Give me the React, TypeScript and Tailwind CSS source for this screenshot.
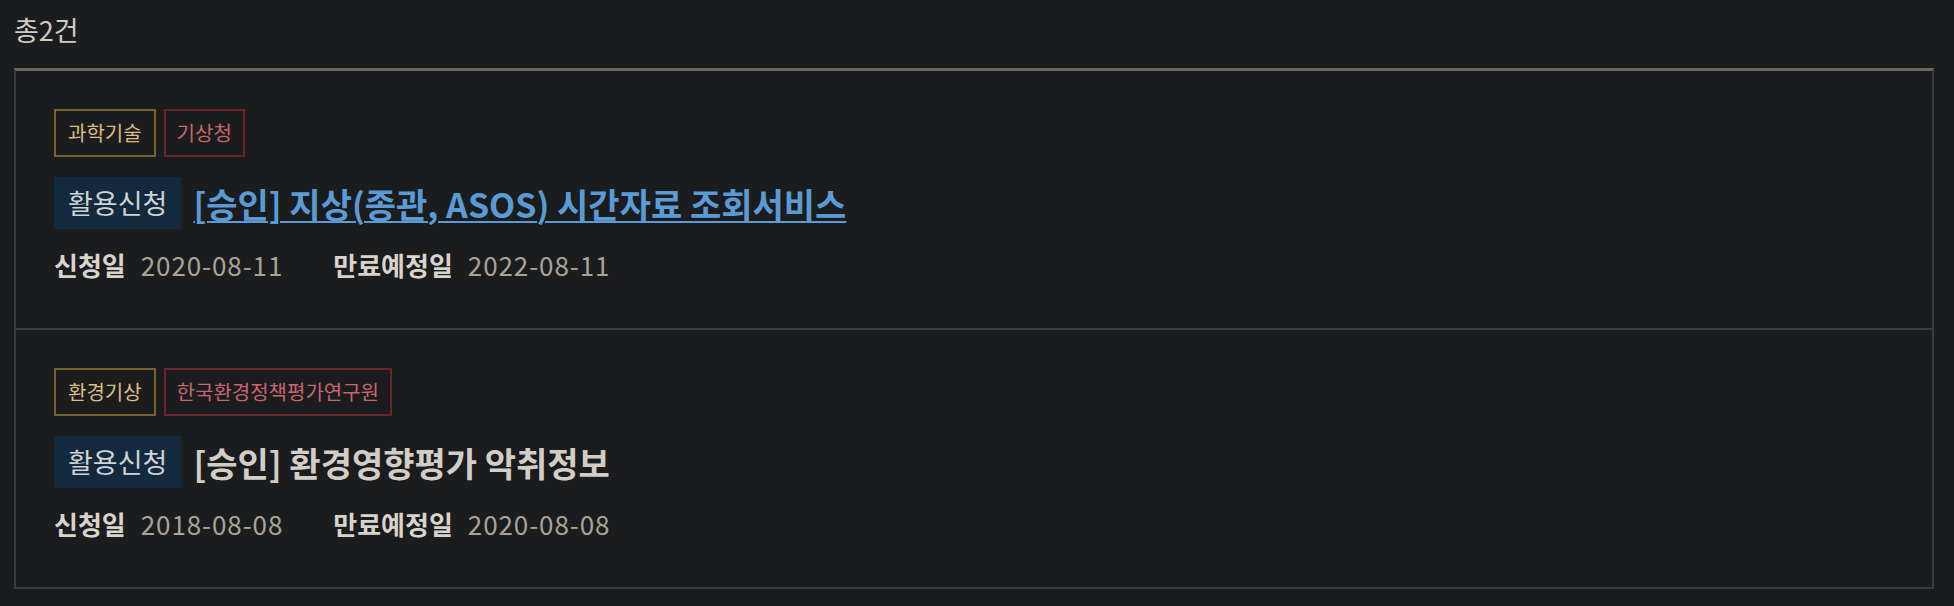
type Item = {
  category: string
  org: string
  title: string
  link: boolean
  applied: string
  expires: string
}

const items: Item[] = [
  {
    category: "과학기술",
    org: "기상청",
    title: "[승인] 지상(종관, ASOS) 시간자료 조회서비스",
    link: true,
    applied: "2020-08-11",
    expires: "2022-08-11",
  },
  {
    category: "환경기상",
    org: "한국환경정책평가연구원",
    title: "[승인] 환경영향평가 악취정보",
    link: false,
    applied: "2018-08-08",
    expires: "2020-08-08",
  },
]

function ResultItem({ item, last }: { item: Item; last: boolean }) {
  return (
    <li
      className={
        last
          ? "px-[38px] pt-[38px] pb-[44px]"
          : "border-b-2 border-[#3a3b3e] px-[38px] pt-[38px] pb-[44px]"
      }
    >
      <div className="flex gap-2">
        <span className="flex h-[48px] items-center border-2 border-[#7a6130] px-[12px] text-[20px] text-[#dcbd82]">
          {item.category}
        </span>
        <span className="flex h-[48px] items-center border-2 border-[#6a2529] px-[11px] text-[20px] text-[#c9646f]">
          {item.org}
        </span>
      </div>

      <div className="mt-5 flex items-center gap-3">
        <span className="flex h-[52px] items-center bg-[#13293d] px-[14px] text-[27px] text-[#cfd3d6]">
          활용신청
        </span>
        {item.link ? (
          <a
            href="#"
            className="text-[34px] font-bold text-[#5b9bd5] underline decoration-2 underline-offset-[3px]"
          >
            {item.title}
          </a>
        ) : (
          <span className="text-[34px] font-bold text-[#d2cec6]">{item.title}</span>
        )}
      </div>

      <div className="mt-4 flex items-center text-[26px] leading-[39px]">
        <span className="font-bold text-[#d8d4cc]">신청일</span>
        <span className="ml-[15px] tracking-[0.9px] text-[#a9a398]">{item.applied}</span>
        <span className="ml-[50px] font-bold text-[#d8d4cc]">만료예정일</span>
        <span className="ml-[15px] tracking-[0.9px] text-[#a9a398]">{item.expires}</span>
      </div>
    </li>
  )
}

export default function App() {
  return (
    <div className="min-h-[606px] bg-[#1b1c1e] px-[14px] pt-[10px] font-['Noto_Sans_CJK_KR','Noto_Sans',sans-serif]">
      <p className="text-[27px] leading-[40px] text-[#cdcbc6]">총2건</p>
      <ul className="mt-[18px] w-[1920px] border-x-2 border-b-2 border-t-[3px] border-x-[#3a3b3e] border-b-[#3a3b3e] border-t-[#6f6a60]">
        {items.map((item, i) => (
          <ResultItem key={item.title} item={item} last={i === items.length - 1} />
        ))}
      </ul>
    </div>
  )
}
